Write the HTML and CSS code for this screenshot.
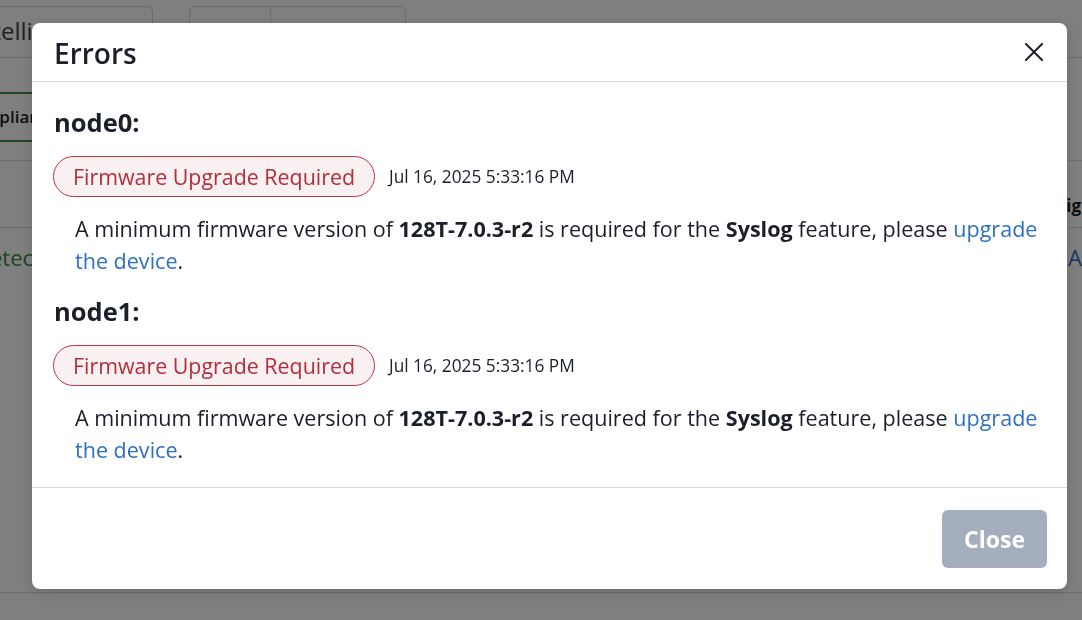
FILE: index.html
```html
<!DOCTYPE html>
<html lang="en">
<head>
    <meta charset="UTF-8">
    <meta name="viewport" content="width=device-width, initial-scale=1.0">
    <title>Device Errors</title>
    <link rel="stylesheet" href="styles.css">
</head>
<body>
    <div class="page">
        <div class="toolbar">
            <div class="picker">Intelligence</div>
            <div class="segments">
                <span class="segment">Day</span>
                <span class="segment">Week</span>
            </div>
        </div>
        <div class="tabs">
            <span class="tab active">Compliance</span>
        </div>
        <div class="grid">
            <div class="grid-head">
                <span class="cell first">Status</span>
                <span class="cell last">Signature</span>
            </div>
            <div class="grid-row">
                <span class="cell first status-ok">Detected</span>
                <span class="cell last link">AI Policy</span>
            </div>
        </div>
    </div>

    <div class="overlay">
        <div class="modal" role="dialog" aria-labelledby="modalTitle">
            <div class="modal-header">
                <h2 id="modalTitle">Errors</h2>
                <button class="icon-close" aria-label="Close">
                    <svg width="18" height="18" viewBox="0 0 18 18">
                        <path d="M1 1 L17 17 M17 1 L1 17" stroke="#1b1f2a" stroke-width="2" stroke-linecap="round"/>
                    </svg>
                </button>
            </div>

            <div class="modal-body">
                <div class="node">
                    <h3>node0:</h3>
                    <div class="node-status">
                        <span class="badge">Firmware Upgrade Required</span>
                        <span class="timestamp">Jul 16, 2025 5:33:16 PM</span>
                    </div>
                    <p>A minimum firmware version of <b>128T-7.0.3-r2</b> is required for the <b>Syslog</b> feature, please <a href="#">upgrade the device</a>.</p>
                </div>

                <div class="node">
                    <h3>node1:</h3>
                    <div class="node-status">
                        <span class="badge">Firmware Upgrade Required</span>
                        <span class="timestamp">Jul 16, 2025 5:33:16 PM</span>
                    </div>
                    <p>A minimum firmware version of <b>128T-7.0.3-r2</b> is required for the <b>Syslog</b> feature, please <a href="#">upgrade the device</a>.</p>
                </div>
            </div>

            <div class="modal-footer">
                <button class="btn-close">Close</button>
            </div>
        </div>
    </div>
</body>
</html>
```

FILE: styles.css
```css
body {
    font-family: "Open Sans", "Liberation Sans", sans-serif;
    background-color: #fff;
    color: #1b1f2a;
    margin: 0;
    padding: 0;
    overflow: hidden;
}

/* page behind the dialog */
.page {
    height: 593px;
    border-bottom: 1px solid #ddd;
    box-sizing: border-box;
    overflow: hidden;
}
.toolbar {
    display: flex;
    gap: 36px;
    padding-top: 6px;
    height: 51px;
    border-bottom: 1px solid #ddd;
}
.picker {
    margin-left: -42px;
    width: 195px;
    padding: 0 12px;
    font-size: 24px;
    line-height: 48px;
    color: #444;
    border: 1px solid #d6d6d6;
    border-radius: 6px;
    box-sizing: border-box;
    height: 52px;
    white-space: nowrap;
    overflow: hidden;
}
.segments {
    display: flex;
    width: 217px;
    height: 52px;
    border: 1px solid #d6d6d6;
    border-radius: 6px;
    box-sizing: border-box;
}
.segment {
    flex: 1;
    font-size: 15px;
    line-height: 50px;
    text-align: center;
    color: #555;
}
.segment:first-child {
    flex: 0 0 80px;
    border-right: 1px solid #ddd;
}
.tabs {
    padding-top: 34px;
    height: 68px;
    border-bottom: 1px solid #ddd;
}
.tab {
    display: inline-block;
    margin-left: -56px;
    padding: 0 16px;
    font-size: 17px;
    font-weight: 600;
    line-height: 46px;
    border: 2px solid #3f8a4a;
    border-radius: 4px;
}
.grid-head,
.grid-row {
    display: flex;
    justify-content: space-between;
}
.grid-head {
    height: 67px;
    align-items: flex-end;
    padding-bottom: 10px;
    box-sizing: border-box;
    font-weight: 700;
    font-size: 17px;
    border-bottom: 1px solid #ddd;
}
.grid-row {
    height: 58px;
    align-items: center;
    font-size: 22px;
}
.cell.first {
    margin-left: -26px;
}
.grid-head .cell.first {
    margin-left: 60px;
}
.cell.last {
    width: 110px;
    margin-right: -96px;
}
.grid-head .cell.last {
    margin-right: -85px;
}
.status-ok {
    color: #3a8a46;
}
.link {
    color: #2f6fbf;
}

/* dialog */
.overlay {
    position: fixed;
    inset: 0;
    background: rgba(0, 0, 0, 0.5);
    padding: 23px 0 0 32px;
}
.modal {
    width: 1035px;
    background: #fff;
    border-radius: 8px;
    box-shadow: 0 4px 14px rgba(0, 0, 0, 0.15);
}
.modal-header {
    display: flex;
    align-items: center;
    justify-content: space-between;
    height: 58px;
    padding: 0 24px 0 22px;
    border-bottom: 1px solid #d3dae3;
}
.modal-header h2 {
    margin: 0;
    font-size: 28px;
    font-weight: 600;
    line-height: 34px;
    padding-top: 1px;
}
.icon-close {
    display: flex;
    border: none;
    background: none;
    padding: 0;
    cursor: pointer;
}
.modal-body {
    display: flex;
    flex-direction: column;
    gap: 16px;
    padding: 22px 22px 21px 21px;
}
.node h3 {
    margin: 0 0 16px 1px;
    font-size: 25.5px;
    font-weight: 700;
    line-height: 36px;
}
.node-status {
    display: flex;
    align-items: center;
    gap: 14px;
}
.badge {
    display: inline-block;
    height: 41px;
    box-sizing: border-box;
    padding: 0 19px;
    font-size: 21.4px;
    line-height: 39px;
    color: #b52d3a;
    background-color: #f9f0f1;
    border: 1px solid #c0353f;
    border-radius: 21px;
}
.timestamp {
    font-size: 17.3px;
    color: #1b1f2a;
}
.node p {
    margin: 16px 0 0 22px;
    font-size: 21.55px;
    line-height: 32px;
}
.node p b {
    font-weight: 700;
}
.node p a {
    color: #2f70c0;
    text-decoration: none;
}
.modal-footer {
    display: flex;
    justify-content: flex-end;
    padding: 22px 20px 21px;
    border-top: 1px solid #d3dae3;
}
.btn-close {
    height: 58px;
    padding: 0 22px;
    font-family: inherit;
    font-size: 23px;
    font-weight: 700;
    color: #fff;
    background-color: #a4aebd;
    border: none;
    border-radius: 6px;
    cursor: pointer;
}
```
